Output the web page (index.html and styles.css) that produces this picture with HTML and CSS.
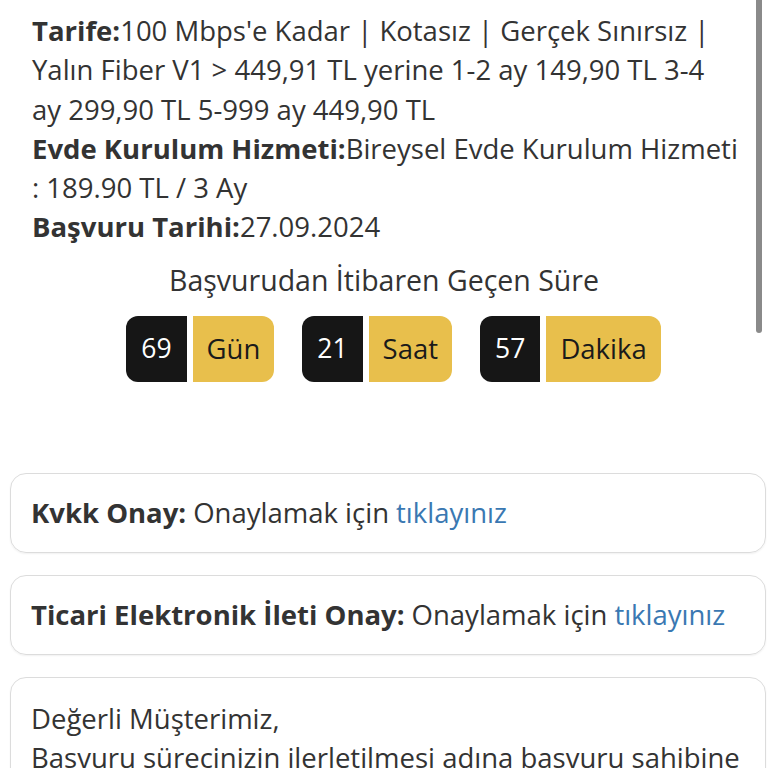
FILE: index.html
```html
<!DOCTYPE html>
<html lang="tr">
<head>
<meta charset="utf-8">
<title>Başvuru Detayı</title>
<link rel="stylesheet" href="styles.css">
</head>
<body>
<div class="page">
  <div class="info">
    <p class="row"><b>Tarife:</b>100 Mbps'e Kadar | Kotasız | Gerçek Sınırsız | Yalın Fiber V1 &gt; 449,91 TL yerine 1-2 ay 149,90 TL 3-4 ay 299,90 TL 5-999 ay 449,90 TL</p>
    <p class="row"><b>Evde Kurulum Hizmeti:</b>Bireysel Evde Kurulum Hizmeti : 189.90 TL / 3 Ay</p>
    <p class="row"><b>Başvuru Tarihi:</b>27.09.2024</p>
  </div>
  <h2 class="timer-title">Başvurudan İtibaren Geçen Süre</h2>
  <div class="timer">
    <div class="unit"><span class="num">69</span><span class="label">Gün</span></div>
    <div class="unit"><span class="num">21</span><span class="label">Saat</span></div>
    <div class="unit"><span class="num">57</span><span class="label">Dakika</span></div>
  </div>
  <div class="cards">
    <div class="card"><b>Kvkk Onay:</b> Onaylamak için <a href="#" class="link">tıklayınız</a></div>
    <div class="card"><b>Ticari Elektronik İleti Onay:</b> Onaylamak için <a href="#" class="link">tıklayınız</a></div>
    <div class="card card-text">
      <p>Değerli Müşterimiz,<br>Başvuru sürecinizin ilerletilmesi adına başvuru sahibine ait kimlik bilgilerinin doğrulanması gerekmektedir.</p>
    </div>
  </div>
</div>
<div class="scrollbar"></div>
</body>
</html>
```
FILE: styles.css
```css
html, body {
  margin: 0;
  padding: 0;
  background: #fff;
  overflow: hidden;
}
body {
  font-family: "Open Sans", "Noto Sans", sans-serif;
  color: #333;
  font-size: 27.5px;
  line-height: 39.3px;
}
.page {
  height: 768px;
  overflow: hidden;
}
.info {
  padding: 11px 29px 0 32px;
}
.row {
  margin: 0;
}
.row b {
  font-weight: 700;
}
.timer-title {
  margin: 14px 0 0;
  text-align: center;
  font-size: 28.5px;
  font-weight: 400;
  line-height: 39px;
}
.timer {
  display: flex;
  justify-content: center;
  gap: 28px;
  padding-left: 19px;
  margin-top: 16px;
}
.unit {
  display: flex;
  gap: 6px;
  height: 66px;
}
.num, .label {
  display: flex;
  align-items: center;
  padding: 0 14px;
}
.num {
  background: #161616;
  color: #fff;
  font-size: 26.5px;
  border-radius: 12px 0 0 12px;
  padding: 0 15px;
}
.label {
  background: #e8bf4c;
  color: #1a1a1a;
  border-radius: 0 12px 12px 0;
}
.cards {
  margin-top: 91px;
  padding: 0 2px 0 10px;
  display: flex;
  flex-direction: column;
  gap: 22px;
}
.card {
  border: 1.5px solid #dcdcdc;
  border-radius: 16px;
  height: 80px;
  box-sizing: border-box;
  display: flex;
  align-items: center;
  padding: 0 20px;
  box-shadow: 0 1px 2px rgba(0,0,0,0.06);
  white-space: nowrap;
}
.card b {
  font-weight: 700;
  margin-right: 7px;
}
.link {
  color: #3a78b2;
  text-decoration: none;
  margin-left: 7px;
}
.card-text {
  height: auto;
  display: block;
  padding: 21px 20px;
  white-space: normal;
}
.card-text p {
  margin: 0;
}
.scrollbar {
  position: fixed;
  top: 0;
  left: 756px;
  width: 6px;
  height: 333px;
  background: #8a8a8a;
  border-radius: 0 0 3px 3px;
}
```
